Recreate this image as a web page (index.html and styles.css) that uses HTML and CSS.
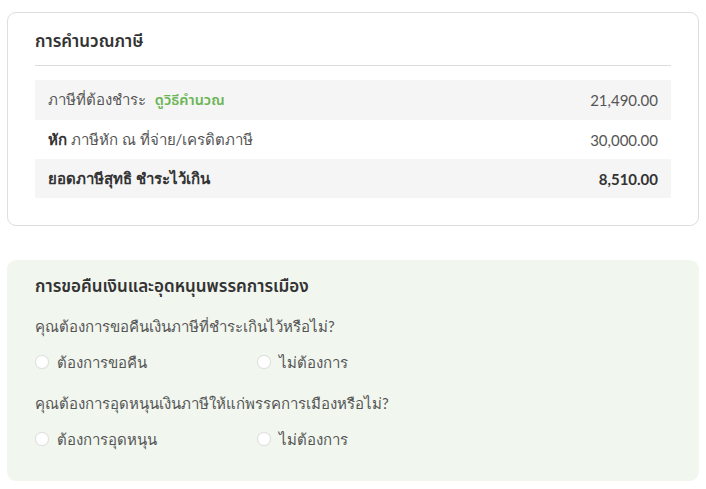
FILE: index.html
```html
<!DOCTYPE html>
<html lang="th">
<head>
<meta charset="utf-8">
<link rel="stylesheet" href="styles.css">
</head>
<body>
<div class="page">
  <section class="card calc">
    <h2 class="card-title">การคำนวณภาษี</h2>
    <div class="rows">
      <div class="row shaded">
        <span class="label">ภาษีที่ต้องชำระ <a class="link" href="#">ดูวิธีคำนวณ</a></span>
        <span class="num">21,490.00</span>
      </div>
      <div class="row">
        <span class="label"><b>หัก</b> ภาษีหัก ณ ที่จ่าย/เครดิตภาษี</span>
        <span class="num">30,000.00</span>
      </div>
      <div class="row shaded total">
        <span class="label">ยอดภาษีสุทธิ ชำระไว้เกิน</span>
        <span class="num">8,510.00</span>
      </div>
    </div>
  </section>

  <section class="card refund">
    <h2 class="card-title">การขอคืนเงินและอุดหนุนพรรคการเมือง</h2>
    <div class="question">คุณต้องการขอคืนเงินภาษีที่ชำระเกินไว้หรือไม่?</div>
    <div class="options">
      <label class="option"><span class="radio"></span>ต้องการขอคืน</label>
      <label class="option"><span class="radio"></span>ไม่ต้องการ</label>
    </div>
    <div class="question">คุณต้องการอุดหนุนเงินภาษีให้แก่พรรคการเมืองหรือไม่?</div>
    <div class="options">
      <label class="option"><span class="radio"></span>ต้องการอุดหนุน</label>
      <label class="option"><span class="radio"></span>ไม่ต้องการ</label>
    </div>
  </section>
</div>
</body>
</html>
```
FILE: styles.css
```css
* { box-sizing: border-box; }
html, body { margin: 0; padding: 0; background: #fff; }
body {
  font-family: Lato, sans-serif;
  color: #444;
  font-size: 15px;
}
.page {
  padding: 12px 7px 8px 7px;
  display: flex;
  flex-direction: column;
  gap: 34px;
}
.card {
  border-radius: 9px;
}
.calc {
  border: 1px solid #dedede;
  padding: 14px 27px 28px 27px;
  height: 214px;
}
.card-title {
  margin: 0;
  font-family: "Noto Sans Thai", Lato, sans-serif;
  font-size: 17px;
  font-weight: 600;
  color: #333;
  line-height: 30px;
}
.calc .card-title {
  padding-bottom: 8px;
  border-bottom: 1px solid #dddddd;
  margin-bottom: 14px;
}
.rows { display: flex; flex-direction: column; }
.row {
  display: flex;
  justify-content: space-between;
  align-items: center;
  height: 39px;
  padding: 0 13px;
  color: #555;
}
.row:first-child { height: 40px; }
.shaded { background: #f5f5f5; }
.label { font-size: 15px; }
.label b { color: #333; font-weight: 700; }
.link { color: #6cb556; text-decoration: none; font-family: "Noto Sans Thai", Lato, sans-serif; font-weight: 600; font-size: 14.5px; margin-left: 5px; }
.total { color: #333; font-weight: 700; }
.num { color: #555; }
.total .num { color: #333; }
.refund {
  background: #f1f6ef;
  padding: 12px 28px 24px 28px;
  height: 221px;
}
.question {
  margin-top: 11px;
  line-height: 26px;
  font-size: 15px;
  color: #555;
}
.options + .question { margin-top: 15px; }
.options {
  display: grid;
  grid-template-columns: 222px 1fr;
  margin-top: 10px;
}
.option {
  display: flex;
  align-items: center;
  gap: 8px;
  line-height: 26px;
  font-size: 15px;
  color: #555;
}
.radio {
  width: 14px;
  height: 14px;
  border-radius: 50%;
  background: #fff;
  border: 1px solid #e0e0e0;
  box-shadow: 0 0 1px rgba(0,0,0,0.08);
  flex: none;
}
```
